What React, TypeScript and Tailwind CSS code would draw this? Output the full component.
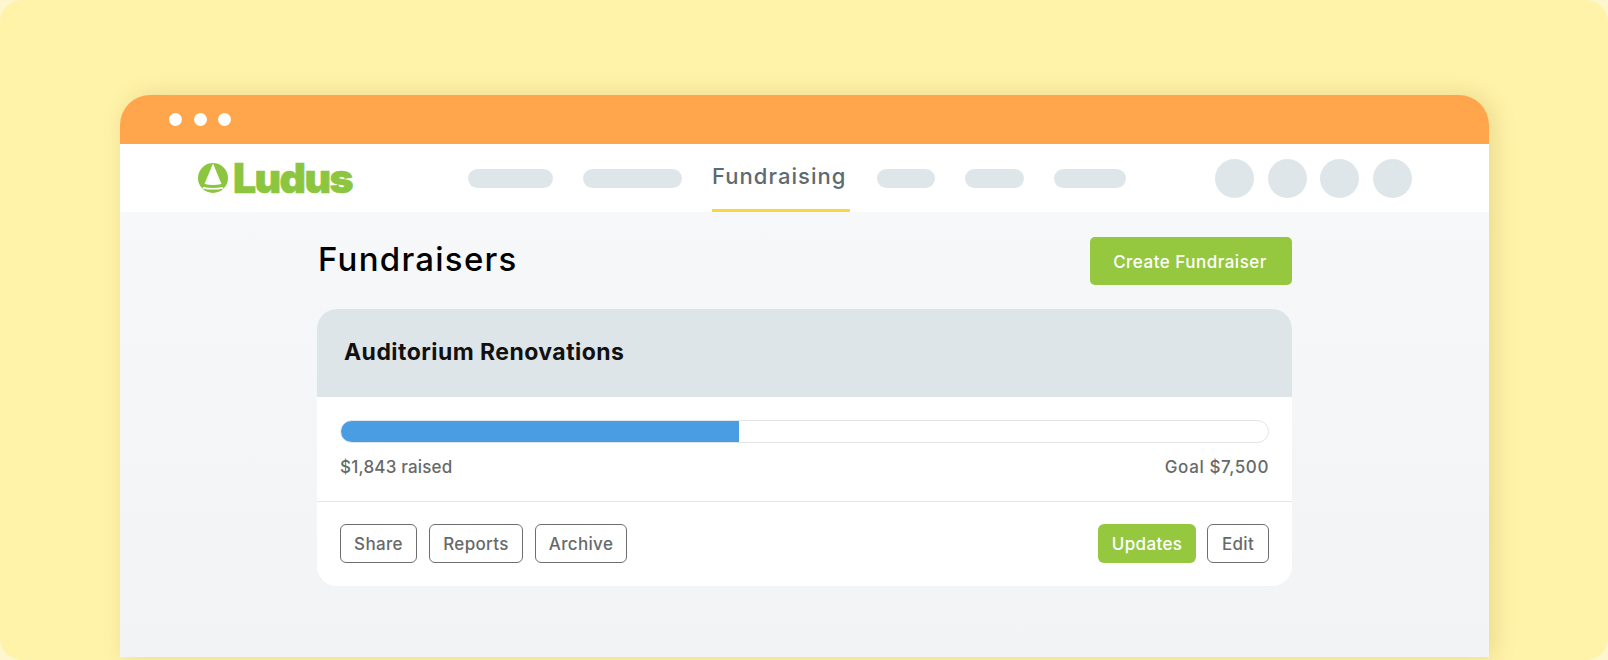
const sans = 'font-["Inter","Liberation_Sans",sans-serif]'

function Pill({ className }: { className: string }) {
  return <div className={`h-[19px] rounded-full bg-[#dfe6e9] ${className}`} />
}

function Avatar() {
  return <div className="size-[39px] rounded-full bg-[#dfe6ea]" />
}

function OutlineButton({ label, className }: { label: string; className: string }) {
  return (
    <button className={`h-[39px] rounded-[6px] border-[1.5px] border-[#6e6e6e] pt-[2px] text-[17px] font-medium tracking-[0.35px] text-[#666a6b] ${className}`}>
      {label}
    </button>
  )
}

function LudusLogo() {
  return (
    <div className="flex items-center">
      <svg width="30" height="30" viewBox="0 0 30 30">
        <circle cx="15" cy="15" r="15" fill="#8cc63f" />
        <path d="M15 0.5 L23.5 21 Q15 23 6.5 21 Z" fill="#fff" />
        <path d="M5.2 24 Q15 26.2 24.8 24 L25.6 25.4 Q15 27.8 4.4 25.4 Z" fill="#fff" />
      </svg>
      <span className="ml-[5px] text-[41px] leading-none font-black tracking-[-1.6px] text-[#8cc63f] [-webkit-text-stroke:0.6px_#8cc63f]">
        Ludus
      </span>
    </div>
  )
}

export default function App() {
  return (
    <div className={`h-[660px] w-[1608px] overflow-hidden bg-[#fdf6cf] ${sans}`}>
      <div className="h-[660px] rounded-[22px] bg-[#fff3a9] pt-[95px] pr-[119px] pb-[3px] pl-[120px]">
        <div className="flex h-full flex-col rounded-t-[30px] shadow-[5px_0_22px_rgba(140,120,40,0.2)]">
          <div className="flex h-[49px] items-center gap-[11.5px] rounded-t-[30px] bg-[#ffa64d] pl-[49px]">
            <div className="size-[13px] rounded-full bg-white" />
            <div className="size-[13px] rounded-full bg-white" />
            <div className="size-[13px] rounded-full bg-white" />
          </div>

          <div className="flex h-[68px] items-center bg-white pl-[78px]">
            <div className="w-[270px]">
              <LudusLogo />
            </div>
            <Pill className="w-[85px]" />
            <Pill className="ml-[30px] w-[99px]" />
            <div className="ml-[30px] flex h-full w-[138px] items-center border-b-[3px] border-[#fbd63c] pb-[1px] text-[22px] font-medium tracking-[1.05px] text-[#5d6a70]">
              Fundraising
            </div>
            <Pill className="ml-[27px] w-[58px]" />
            <Pill className="ml-[30px] w-[59px]" />
            <Pill className="ml-[30px] w-[72px]" />
            <div className="ml-[89px] flex gap-[13.5px]">
              <Avatar />
              <Avatar />
              <Avatar />
              <Avatar />
            </div>
          </div>

          <main className="flex-1 bg-gradient-to-b from-[#f6f8f9] to-[#f2f3f5] px-[197px] pt-[25px]">
            <div className="flex h-[48px] items-center justify-between">
              <h1 className="pb-[4px] pl-[1px] text-[33px] leading-none font-medium tracking-[1.25px] text-black">Fundraisers</h1>
              <button className="h-[48px] w-[202px] rounded-[5px] bg-[#95c83f] pt-[3px] pr-[2px] text-[17px] font-medium tracking-[0.5px] text-white">
                Create Fundraiser
              </button>
            </div>

            <section className="mt-[24px] overflow-hidden rounded-[20px] bg-white">
              <div className="flex h-[88px] items-center bg-[#dee5e8] pb-[2px] pl-[27px]">
                <h2 className="text-[23px] font-bold tracking-[0.45px] text-[#111]">Auditorium Renovations</h2>
              </div>

              <div className="px-[23px] pt-[23px]">
                <div className="h-[23px] overflow-hidden rounded-full border border-[#e1e5e8]">
                  <div className="-m-px h-[23px] w-[399px] bg-[#4a9de3]" />
                </div>
                <div className="mt-[12px] flex justify-between text-[17px] font-medium text-[#666a6b]">
                  <span className="tracking-[0.2px]">$1,843 raised</span>
                  <span className="tracking-[0.6px]">Goal $7,500</span>
                </div>
              </div>

              <div className="mt-[20px] flex h-[85px] items-center justify-between border-t border-[#e4e7ea] px-[23px]">
                <div className="flex gap-[12px]">
                  <OutlineButton label="Share" className="w-[77px]" />
                  <OutlineButton label="Reports" className="w-[94px]" />
                  <OutlineButton label="Archive" className="w-[92px]" />
                </div>
                <div className="flex gap-[11px]">
                  <button className="h-[39px] w-[98px] rounded-[6px] bg-[#95c83f] pt-[2px] text-[17px] font-medium tracking-[0.35px] text-white">
                    Updates
                  </button>
                  <OutlineButton label="Edit" className="w-[62px]" />
                </div>
              </div>
            </section>
          </main>
        </div>
      </div>
    </div>
  )
}
